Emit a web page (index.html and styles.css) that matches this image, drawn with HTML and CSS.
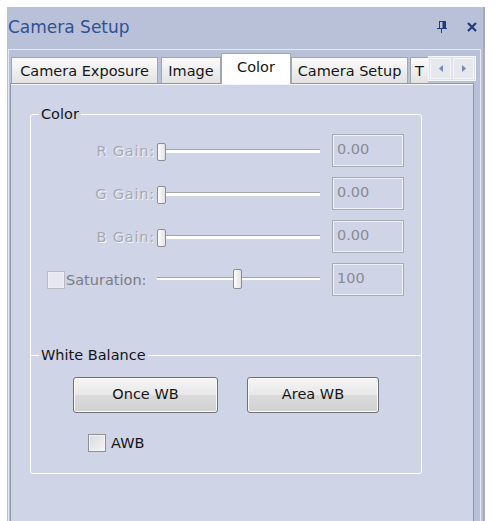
FILE: index.html
```html
<!DOCTYPE html>
<html>
<head>
<meta charset="utf-8">
<link rel="stylesheet" href="styles.css">
</head>
<body>
<div class="window">
  <div class="titlebar">
    <span class="title">Camera Setup</span>
    <span class="title-icons">
      <svg class="pin" width="10" height="12" viewBox="0 0 10 12">
        <path d="M2 0.5H8.5M2.5 0V7M6 0h2.5v7H6z M0 7.5H10M4.5 8V12" stroke="#1f3d7c" stroke-width="1" fill="#1f3d7c"/>
      </svg>
      <svg class="close" width="10" height="10" viewBox="0 0 10 10">
        <path d="M1 1L9 9M9 1L1 9" stroke="#1f3d7c" stroke-width="2.2" fill="none"/>
      </svg>
    </span>
  </div>
  <div class="frame">
    <div class="tabstrip">
      <div class="tab t1">Camera Exposure</div>
      <div class="tab t2">Image</div>
      <div class="tab sel">Color</div>
      <div class="tab t4">Camera Setup</div>
      <div class="tab t5">T</div>
      <div class="scroller">
        <span class="sbtn"><svg width="4" height="7" viewBox="0 0 4 7"><path d="M4 0V7L0 3.5Z" fill="#7288b6"/></svg></span>
        <span class="sbtn"><svg width="4" height="7" viewBox="0 0 4 7"><path d="M0 0V7L4 3.5Z" fill="#7288b6"/></svg></span>
      </div>
    </div>
    <div class="panel">
      <fieldset class="group">
        <legend>Color</legend>
        <div class="rows">
          <div class="row">
            <span class="lbl dis">R Gain:</span>
            <div class="slider"><div class="track gain"></div><div class="thumb" style="left:0px"></div></div>
            <div class="box">0.00</div>
          </div>
          <div class="row">
            <span class="lbl dis">G Gain:</span>
            <div class="slider"><div class="track gain"></div><div class="thumb" style="left:0px"></div></div>
            <div class="box">0.00</div>
          </div>
          <div class="row">
            <span class="lbl dis">B Gain:</span>
            <div class="slider"><div class="track gain"></div><div class="thumb" style="left:0px"></div></div>
            <div class="box">0.00</div>
          </div>
          <div class="row">
            <span class="lbl sat"><span class="check light"></span><span class="sat-text">Saturation:</span></span>
            <div class="slider"><div class="track"></div><div class="thumb tall" style="left:76px"></div></div>
            <div class="box">100</div>
          </div>
        </div>
        <div class="divider"><span class="line short"></span><span class="dlabel">White Balance</span><span class="line"></span></div>
        <div class="buttons">
          <div class="btn once">Once WB</div>
          <div class="btn area">Area WB</div>
        </div>
        <div class="awb"><span class="check"></span><span class="awb-text">AWB</span></div>
      </fieldset>
    </div>
  </div>
</div>
</body>
</html>
```
FILE: styles.css
```css
* { box-sizing: border-box; }
body {
  margin: 0;
  background: #ffffff;
  font-family: "DejaVu Sans", sans-serif;
  font-size: 14.5px;
  color: #151515;
}
.window {
  margin: 7px 0 0 7px;
  width: 478px;
  height: 520px;
  background: #b9c1d9;
  border-right: 2px solid #a5aab8;
  display: flex;
  flex-direction: column;
  overflow: hidden;
}
.titlebar {
  height: 42px;
  flex: none;
  display: flex;
  align-items: flex-start;
  padding: 10px 0 0 1px;
}
.title {
  font-size: 17px;
  line-height: 20px;
  color: #2e5193;
}
.title-icons {
  margin-left: auto;
  margin-right: 6px;
  display: flex;
  align-items: flex-start;
  gap: 20px;
  padding-top: 4px;
}
.title-icons .close { margin-top: 1px; }
.frame {
  flex: 1;
  margin: 0 2px 0 1px;
  border: 1px solid #e4e8f2;
  border-bottom: none;
  display: flex;
  flex-direction: column;
}
.tabstrip {
  height: 33px;
  flex: none;
  position: relative;
  display: flex;
  align-items: flex-end;
  padding-left: 2px;
}
.tab {
  flex: none;
  height: 26px;
  border: 1px solid #a2a6b0;
  border-bottom: none;
  background: linear-gradient(#fbfbfb, #e2e2e2);
  text-align: center;
  line-height: 27px;
  white-space: nowrap;
  color: #151515;
}
.t1 { width: 147px; margin-right: 3px; }
.t2 { width: 60px; }
.sel {
  width: 70px;
  height: 31px;
  margin-bottom: -1px;
  background: #ffffff;
  line-height: 26px;
  position: relative;
  z-index: 1;
}
.t4 { width: 117px; margin-right: 2px; }
.t5 { width: 18px; text-align: left; padding-left: 4px; border-right: none; }
.scroller {
  position: absolute;
  left: 419px;
  top: 6px;
  width: 48px;
  height: 25px;
  border: 1px solid #f5f6fa;
  background: #dfe2ea;
  display: flex;
  gap: 2px;
  padding: 1px;
  z-index: 2;
}
.sbtn {
  flex: 1;
  display: flex;
  align-items: center;
  justify-content: center;
  background: #e6e8ee;
  border: 1px solid #f4f5f8;
}
.panel {
  flex: 1;
  margin-left: 1px;
  width: 464px;
  border: 1px solid #8f96ab;
  border-bottom: none;
  background: #cfd4e7;
  box-shadow: inset 0 1px 0 #f4f6fb;
  padding-top: 21px;
}
.group {
  margin: 0 0 0 19px;
  padding: 0 0 21px 0;
  width: 392px;
  border: 1px solid #ffffff;
  border-radius: 3px;
  min-inline-size: 0;
}
.group legend {
  margin-left: 8px;
  padding: 0 2px;
  line-height: 18px;
  color: #151515;
}
.rows {
  margin-top: 11px;
  display: flex;
  flex-direction: column;
  gap: 10px;
}
.row {
  height: 33px;
  display: flex;
  align-items: center;
}
.lbl {
  width: 124px;
  flex: none;
  text-align: right;
  white-space: nowrap;
}
.dis {
  color: #a6a9b2;
  text-shadow: 1px 1px 0 #f2f4fa;
  letter-spacing: 0.8px;
}
.sat {
  display: flex;
  align-items: center;
  padding-left: 16px;
  text-align: left;
}
.sat-text { color: #7b7d84; margin-left: 1px; }
.slider {
  width: 163px;
  height: 33px;
  margin-left: 2px;
  position: relative;
  flex: none;
}
.track {
  margin-top: 14px;
  height: 4px;
  border-top: 1px solid #a1a3a9;
  border-bottom: 1px solid #d4d6dd;
  background: #ffffff;
}
.track.gain { margin-top: 15px; margin-left: 4px; height: 5px; }
.thumb {
  position: absolute;
  top: 9px;
  width: 9px;
  height: 18px;
  border: 1px solid #8b8d93;
  border-radius: 2px;
  background: linear-gradient(90deg, #fdfdfd, #e3e3e6);
}
.thumb.tall { top: 6px; height: 20px; }
.box {
  width: 72px;
  height: 33px;
  margin-left: 12px;
  flex: none;
  border: 1px solid #a9abb2;
  box-shadow: inset 0 0 0 1px #eef0f6;
  color: #8a8c92;
  padding: 5px 0 0 4px;
  line-height: 18px;
}
.check {
  width: 18px;
  height: 18px;
  flex: none;
  border: 1px solid #8e8f94;
  background: linear-gradient(135deg, #d9dade, #f6f6f7);
  box-shadow: inset 0 0 0 1px #f4f4f6;
}
.check.light {
  border-color: #b9bcc4;
  background: #e6e8ee;
  box-shadow: inset 0 0 0 1px #eceef3;
}
.divider {
  margin-top: 50px;
  height: 18px;
  display: flex;
  align-items: center;
}
.line {
  flex: 1;
  height: 1px;
  background: #ffffff;
}
.line.short { flex: none; width: 8px; }
.dlabel {
  padding: 0 2px;
  line-height: 18px;
  color: #151515;
}
.buttons {
  margin: 13px 0 0 42px;
  display: flex;
  gap: 29px;
}
.btn {
  height: 36px;
  border: 1px solid #707174;
  border-radius: 3px;
  background: linear-gradient(#f5f5f5, #e8e8e8 50%, #dadada 51%, #d2d2d2);
  box-shadow: inset 0 0 0 1px #fbfbfb;
  text-align: center;
  line-height: 33px;
  color: #151515;
}
.once { width: 145px; }
.area { width: 132px; }
.awb {
  margin: 21px 0 0 57px;
  display: flex;
  align-items: center;
}
.awb-text { margin-left: 5px; color: #151515; }
```
